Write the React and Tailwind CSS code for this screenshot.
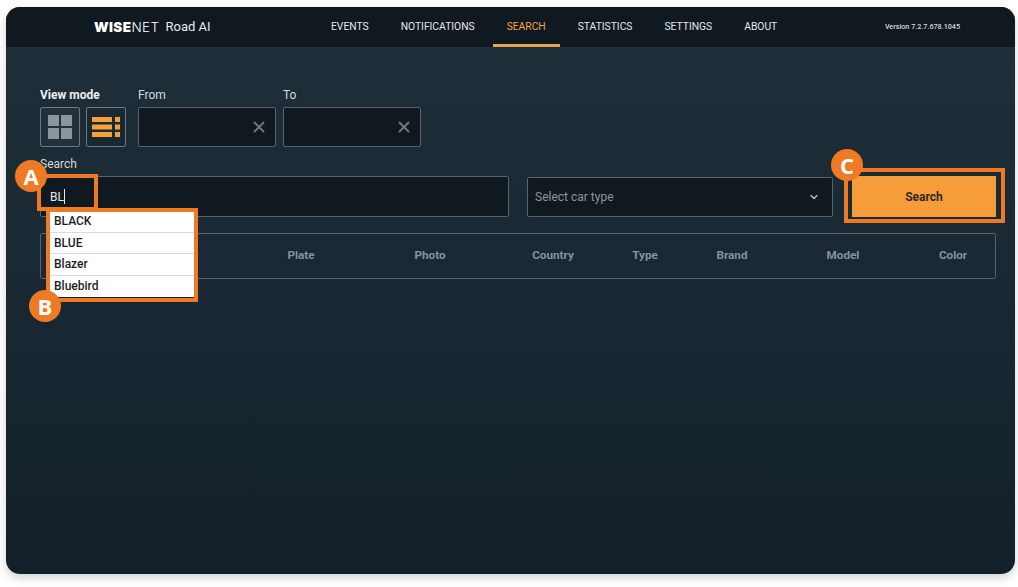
import { X, ChevronDown } from 'lucide-react'

const navItems = ['EVENTS', 'NOTIFICATIONS', 'SEARCH', 'STATISTICS', 'SETTINGS', 'ABOUT']
const suggestions = ['BLACK', 'BLUE', 'Blazer', 'Bluebird']

const columns = [
  { label: 'Date', cls: 'w-[194px]' },
  { label: 'Plate', cls: 'w-[132px]' },
  { label: 'Photo', cls: 'w-[126px]' },
  { label: 'Country', cls: 'w-[120px]' },
  { label: 'Type', cls: 'w-[64px]' },
  { label: 'Brand', cls: 'w-[110px]' },
  { label: 'Model', cls: 'w-[112px]' },
  { label: 'Color', cls: 'w-[96px] pl-[12px]' },
]

function Badge({ letter, className }) {
  return (
    <div className={`absolute w-[32px] h-[32px] rounded-full bg-[#f07a24] flex items-center justify-center text-white text-[22px] font-bold font-['Open_Sans',sans-serif] ${className}`}>
      {letter}
    </div>
  )
}

function DateField() {
  return (
    <div className="w-[138px] h-[40px] bg-[#10191f] border border-[#55656e] rounded-[2px] flex items-center justify-end pr-[7px]">
      <X size={18} strokeWidth={2.4} className="text-[#6f7a81]" />
    </div>
  )
}

export default function App() {
  return (
    <div className="w-[1018px] h-[587px] bg-white pl-[6px] pt-[7px] overflow-hidden font-['Roboto',sans-serif]">
      <div className="relative w-[1009px] h-[567px] rounded-[14px] overflow-hidden bg-gradient-to-b from-[#1f303a] to-[#13202a] shadow-[0_4px_10px_rgba(0,0,0,0.18)]">
        {/* Header */}
        <header className="h-[40px] bg-[#10191f] flex items-center relative">
          <div className="w-[326px] pl-[88px] flex items-center text-white">
            <span className="text-[13.5px] font-black tracking-[0.4px] font-['Inter',sans-serif]">WISE</span>
            <span className="text-[13.5px] font-light tracking-[0.4px] font-['Inter',sans-serif]">NET</span>
            <span className="ml-[6px] text-[13px] text-[#e8eaeb]">Road AI</span>
          </div>
          <nav className="flex h-full gap-[4px] -ml-[15px]">
            {navItems.map(item => (
              <div
                key={item}
                className={`h-full px-[14px] pt-[2px] flex items-center text-[10.3px] border-b-[3px] ${item === 'SEARCH' ? 'text-[#f3a24a] border-[#e8a34e]' : 'text-[#e4e7e8] border-transparent'}`}
              >
                {item}
              </div>
            ))}
          </nav>
          <div className="ml-auto mr-[55px] text-[7.2px] font-medium text-[#d5d9db]">Version 7.2.7.678.1045</div>
        </header>

        <main className="pl-[34px] pr-[19px]">
          {/* View mode + dates */}
          <div className="flex pt-[40px] gap-[7px]">
            <div className="w-[91px]">
              <div className="h-[20px] pt-[1px] text-[12px] font-bold text-[#eef0f1] leading-[14px]">View mode</div>
              <div className="flex gap-[6px]">
                <button className="w-[40px] h-[40px] border border-[#6b7a83] rounded-[2px] bg-[#22323b] flex items-center justify-center">
                  <svg width="24" height="24" viewBox="0 0 24 24" fill="#8b959b">
                    <rect x="0" y="0" width="11" height="11" />
                    <rect x="13" y="0" width="11" height="11" />
                    <rect x="0" y="13" width="11" height="11" />
                    <rect x="13" y="13" width="11" height="11" />
                  </svg>
                </button>
                <button className="w-[40px] h-[40px] border border-[#6b7a83] rounded-[2px] bg-[#1a2831] flex items-center justify-center">
                  <svg width="28" height="20" viewBox="0 0 28 20" fill="#f3a13c">
                    <rect x="0" y="0" width="20" height="5" />
                    <rect x="0" y="7.5" width="20" height="5" />
                    <rect x="0" y="15" width="20" height="5" />
                    <rect x="23" y="0" width="5" height="5" />
                    <rect x="23" y="7.5" width="5" height="5" />
                    <rect x="23" y="15" width="5" height="5" />
                  </svg>
                </button>
              </div>
            </div>
            <div>
              <div className="h-[20px] pt-[1px] text-[12px] text-[#d5d9db] leading-[14px]">From</div>
              <DateField />
            </div>
            <div>
              <div className="h-[20px] pt-[1px] text-[12px] text-[#d5d9db] leading-[14px]">To</div>
              <DateField />
            </div>
          </div>

          {/* Search row */}
          <div className="mt-[9px] h-[20px] pt-[1px] text-[12px] text-[#d5d9db] leading-[14px]">Search</div>
          <div className="flex">
            <div className="relative w-[469px] h-[41px] bg-[#10191f] border border-[#55656e] rounded-[2px] flex items-center pl-[9px] text-[12px] text-[#e8eaeb]">
              BL<span className="w-px h-[15px] bg-[#e8eaeb]" />
              <div className="absolute z-10 left-[8px] top-[34px] w-[145px] bg-white text-[12px] font-medium text-[#1a1f24] shadow">
                {suggestions.map((s, i) => (
                  <div key={s} className={`h-[21.5px] pl-[5px] flex items-center ${i < 3 ? 'border-b border-[#d8dcdf]' : ''}`}>
                    {s}
                  </div>
                ))}
              </div>
            </div>
            <div className="ml-[18px] w-[306px] h-[40px] mt-[1px] bg-[#10191f] border border-[#55656e] rounded-[2px] flex items-center justify-between pl-[7px] pr-[12px] text-[12px] text-[#8d979d]">
              Select car type
              <ChevronDown size={12} strokeWidth={2.4} className="text-[#c5cacd]" />
            </div>
            <button className="ml-[19px] w-[144px] h-[41px] bg-[#f59d38] text-[12px] font-bold text-[#2d2a24]">Search</button>
          </div>

          {/* Table header */}
          <div className="mt-[16px] w-[956px] h-[46px] border border-[#55656e] rounded-[2px] flex items-center text-[11.7px] font-bold text-[#87929a]">
            {columns.map(c => (
              <div key={c.label} className={`${c.cls} text-center`}>{c.label}</div>
            ))}
          </div>
        </main>

        {/* Annotations */}
        <div className="absolute left-[31px] top-[167px] w-[61px] h-[37px] border-[4px] border-[#f07a24]" />
        <div className="absolute z-20 left-[40px] top-[201px] w-[152px] h-[94px] border-[4px] border-[#f07a24]" />
        <div className="absolute left-[838px] top-[161px] w-[161px] h-[55px] border-[4px] border-[#f07a24]" />
        <Badge letter="A" className="left-[9px] top-[153px]" />
        <Badge letter="B" className="z-30 left-[23px] top-[283px]" />
        <Badge letter="C" className="left-[825px] top-[142px]" />
      </div>
    </div>
  )
}
